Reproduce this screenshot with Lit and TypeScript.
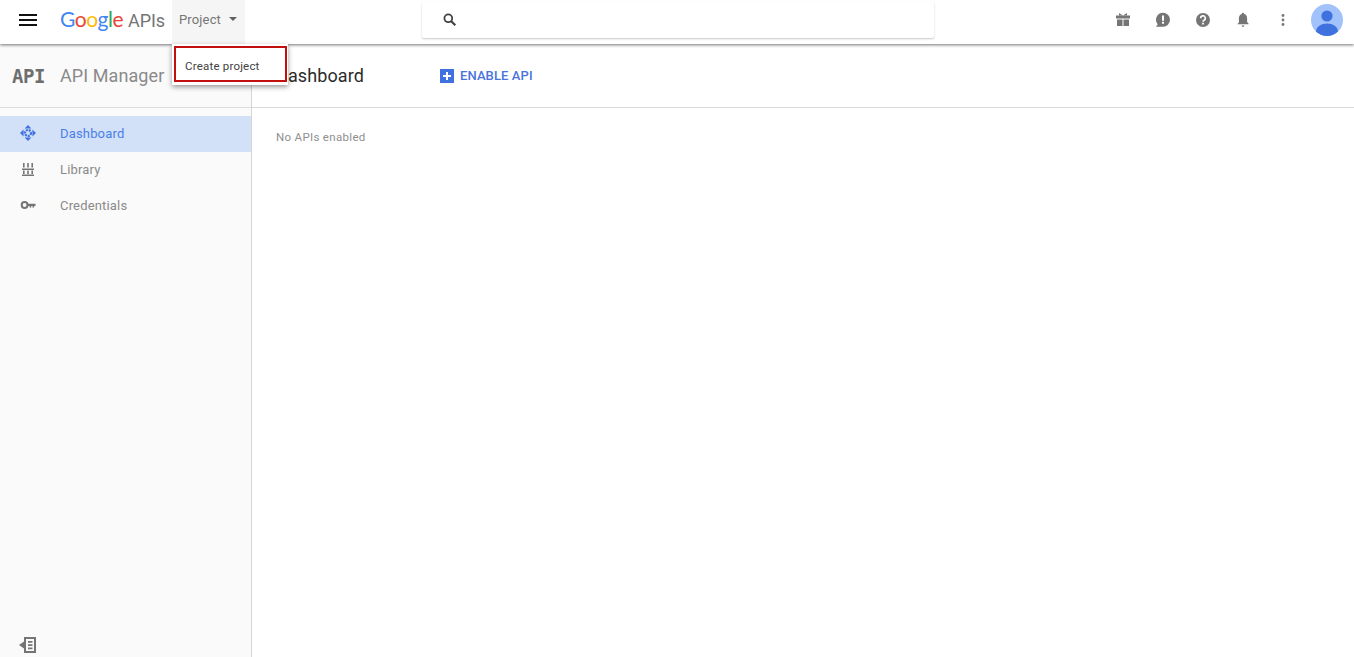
import { LitElement, html, css } from "lit";
import { customElement } from "lit/decorators.js";

@customElement("app-root")
export class AppRoot extends LitElement {
  static styles = css`
    :host { display: block; width: 1354px; height: 657px; overflow: hidden; background: #fff; font-family: Roboto, "Liberation Sans", sans-serif; position: relative; }
    .top { height: 44px; box-sizing: border-box; padding-bottom: 4px; display: flex; align-items: center; background: #fff; box-shadow: 0 1px 3px rgba(0,0,0,.55); position: relative; z-index: 2; }
    .burger { width: 18px; height: 14px; margin-left: 19px; display: block; }
    .logo { margin-left: 23px; width: 112px; display: flex; align-items: baseline; white-space: nowrap; line-height: 40px; }
    .g { font-family: Lato, sans-serif; font-size: 21px; letter-spacing: -.5px; }
    .b { color: #4285f4; } .r { color: #ea4335; } .y { color: #fbbc05; } .gr { color: #34a853; }
    .apis { color: #757575; margin-left: 5px; font-size: 18px; letter-spacing: -.1px; }
    .proj { margin-left: 0; width: 73px; height: 44px; margin-bottom: -4px; padding-bottom: 6px; box-sizing: border-box; padding-left: 7px; background: #f5f5f5; display: flex; align-items: center; color: #757575; font-size: 13px; letter-spacing: .15px; }
    .caret { margin-left: 8px; width: 0; height: 0; border-left: 4px solid transparent; border-right: 4px solid transparent; border-top: 4px solid #616161; }
    .searchwrap { margin-left: 177px; width: 512px; height: 36px; box-sizing: border-box; border-radius: 2px; box-shadow: 0 1px 2px rgba(0,0,0,.22); display: flex; align-items: center; padding-left: 20px; }
    .icons { margin-left: auto; display: flex; align-items: center; }
    .ic { width: 16px; height: 16px; margin-left: 24px; display: block; }
    .ic.first { margin-left: 0; }
    .avatar { width: 32px; height: 32px; margin-left: 20px; margin-right: 11px; display: block; }
    .body { display: flex; height: 613px; }
    .side { width: 252px; box-sizing: border-box; background: #fafafa; border-right: 1px solid #d6d6d6; display: flex; flex-direction: column; }
    .shead { height: 64px; box-sizing: border-box; border-bottom: 1px solid #dcdcdc; display: flex; align-items: center; }
    .apimark { font-family: "DejaVu Sans Mono", monospace; font-weight: 700; font-size: 19px; letter-spacing: -.4px; color: #6e6e6e; margin-left: 12px; width: 48px; }
    .sname { font-size: 18px; color: #8a8a8a; letter-spacing: .08px; }
    .nav { margin-top: 8px; flex: 1; }
    .item { height: 36px; padding-bottom: 2px; box-sizing: border-box; display: flex; align-items: center; font-size: 13px; color: #8a8a8a; letter-spacing: .17px; }
    .item.on { background: #d2e0f8; color: #4a7fe8; }
    .item svg { width: 16px; height: 16px; margin-left: 20px; margin-right: 24px; display: block; }
    .foot { height: 21px; padding-left: 19px; }
    .foot svg { display: block; width: 18px; height: 18px; }
    .main { flex: 1; display: flex; flex-direction: column; }
    .mhead { height: 64px; box-sizing: border-box; border-bottom: 1px solid #d9d9d9; display: flex; align-items: center; padding-left: 24px; }
    .title { width: 164px; font-size: 18px; color: #2b2b2b; letter-spacing: .1px; }
    .enable { display: flex; align-items: center; color: #4a74dc; font-size: 13px; font-weight: 500; letter-spacing: .1px; }
    .plus { width: 14px; height: 14px; margin-right: 6px; display: block; }
    .none { margin: 22px 0 0 24px; font-size: 11.5px; color: #8f8f8f; letter-spacing: .32px; line-height: 14px; }
    .menu { position: absolute; left: 172px; top: 44px; width: 116px; height: 41px; background: #fff; box-shadow: 0 2px 5px rgba(0,0,0,.4); z-index: 3; box-sizing: border-box; }
    .redbox { position: absolute; left: 2px; top: 2px; width: 113px; height: 36px; box-sizing: border-box; border: 2px solid #c40f0f; display: flex; align-items: center; padding: 4px 0 0 9px; font-size: 11.5px; letter-spacing: .2px; color: #424242; }
  `;

  render() {
    return html`
      <div class="top">
        <svg class="burger" viewBox="0 0 18 14"><path fill="#111" d="M0 1h18v2H0zM0 6h18v2H0zM0 11h18v2H0z"/></svg>
        <div class="logo"><span class="g"><span class="b">G</span><span class="r">o</span><span class="y">o</span><span class="b">g</span><span class="gr">l</span><span class="r">e</span></span><span class="apis">APIs</span></div>
        <div class="proj">Project<span class="caret"></span></div>
        <div class="searchwrap">
          <svg width="16" height="16" viewBox="0 0 16 16"><circle cx="6.3" cy="6.3" r="3.9" fill="none" stroke="#424242" stroke-width="1.8"/><path d="M9.3 9.3l4 4" stroke="#424242" stroke-width="2.2"/></svg>
        </div>
        <div class="icons">
          <svg class="ic first" viewBox="0 0 16 16"><path fill="#757575" d="M1 3.500h14v3H1zM2 7.500h5.500v6.500H2zM8.500 7.500H14V14H8.500z"/><path fill="#757575" d="M4 1l4 2.500L12 1v2.500H4z"/></svg>
          <svg class="ic" viewBox="0 0 16 16"><path fill="#757575" d="M8 .8a7 7 0 0 1 0 14H1l1.7-2.500A7 7 0 0 1 8 .8z"/><path fill="#fff" d="M7 3.600h2v5.200H7zM7 9.800h2v2H7z"/></svg>
          <svg class="ic" viewBox="0 0 16 16"><circle cx="8" cy="8" r="7" fill="#757575"/><path fill="none" stroke="#fff" stroke-width="1.6" d="M5.700 6.300A2.300 2.300 0 1 1 9 8.200c-.7.400-1 .8-1 1.600"/><path fill="#fff" d="M7.100 10.800h1.800v1.700H7.100z"/></svg>
          <svg class="ic" viewBox="0 0 16 16"><path fill="#757575" d="M8 .8c.7 0 1.100.5 1.100 1.200 2 .5 3 2.200 3 4.200v3.800l1.400 1.500v.7h-11V12l1.400-1.500V6.200c0-2 1-3.700 3-4.200 0-.7.4-1.200 1.100-1.200zM6.600 13.600h2.800c0 .8-.6 1.400-1.400 1.400s-1.400-.6-1.400-1.400z"/></svg>
          <svg class="ic" viewBox="0 0 16 16"><circle cx="8" cy="3.500" r="1.400" fill="#757575"/><circle cx="8" cy="8" r="1.400" fill="#757575"/><circle cx="8" cy="12.500" r="1.400" fill="#757575"/></svg>
          <svg class="avatar" viewBox="0 0 32 32"><defs><clipPath id="c"><circle cx="16" cy="16" r="16"/></clipPath></defs><g clip-path="url(#c)"><rect width="32" height="32" fill="#a1c2fa"/><circle cx="16" cy="12" r="5.600" fill="#3f72df"/><ellipse cx="16" cy="27" rx="11" ry="7.500" fill="#3f72df"/></g></svg>
        </div>
      </div>
      <div class="body">
        <div class="side">
          <div class="shead"><span class="apimark">API</span><span class="sname">API Manager</span></div>
          <div class="nav">
            <div class="item on">
              <svg viewBox="0 0 16 16"><path fill="#3f72df" d="M8 0l3.400 3.600H4.600zM8 16l-3.400-3.600h6.800zM0 8l3.600-3.400v6.800zM16 8l-3.600 3.400V4.600z"/><circle cx="8" cy="8" r="3" fill="none" stroke="#3f72df" stroke-width="2.200" stroke-dasharray="2 .9"/></svg>
              Dashboard
            </div>
            <div class="item">
              <svg viewBox="0 0 16 16"><path fill="#757575" d="M2 13.500h12V15H2zM2 7.500h12V9H2zM3 2h1.600v4.500H3zM7.200 2h1.600v4.500H7.200zM11.400 2h1.600v4.500h-1.600zM3 9.500h1.600v3.500H3zM7.200 9.500h1.600v3.500H7.200zM11.400 9.500h1.600v3.500h-1.600z"/></svg>
              Library
            </div>
            <div class="item">
              <svg viewBox="0 0 16 16"><circle cx="4.600" cy="8" r="2.900" fill="none" stroke="#757575" stroke-width="2"/><path fill="#757575" d="M7 6.800h8.500v2.200h-1.400v1.600h-1.600V9h-1.200v1.600H9.600V9H7z"/></svg>
              Credentials
            </div>
          </div>
          <div class="foot">
            <svg viewBox="0 0 18 18"><path fill="#757575" d="M5 5.500v7L0 9z"/><path fill="#757575" fill-rule="evenodd" d="M5 1h12v16H5zM7 3v12h8V3z"/><path fill="#757575" d="M9 5h4.500v1.800H9zM9 8.200h4.500V10H9zM9 11.400h4.500v1.800H9z"/></svg>
          </div>
        </div>
        <div class="main">
          <div class="mhead">
            <div class="title">Dashboard</div>
            <div class="enable">
              <svg class="plus" viewBox="0 0 14 14"><rect width="14" height="14" fill="#3f72df"/><path fill="#fff" d="M6 3h2v3h3v2H8v3H6V8H3V6h3z"/></svg>
              ENABLE API
            </div>
          </div>
          <div class="none">No APIs enabled</div>
        </div>
      </div>
      <div class="menu"><div class="redbox">Create project</div></div>
    `;
  }
}
